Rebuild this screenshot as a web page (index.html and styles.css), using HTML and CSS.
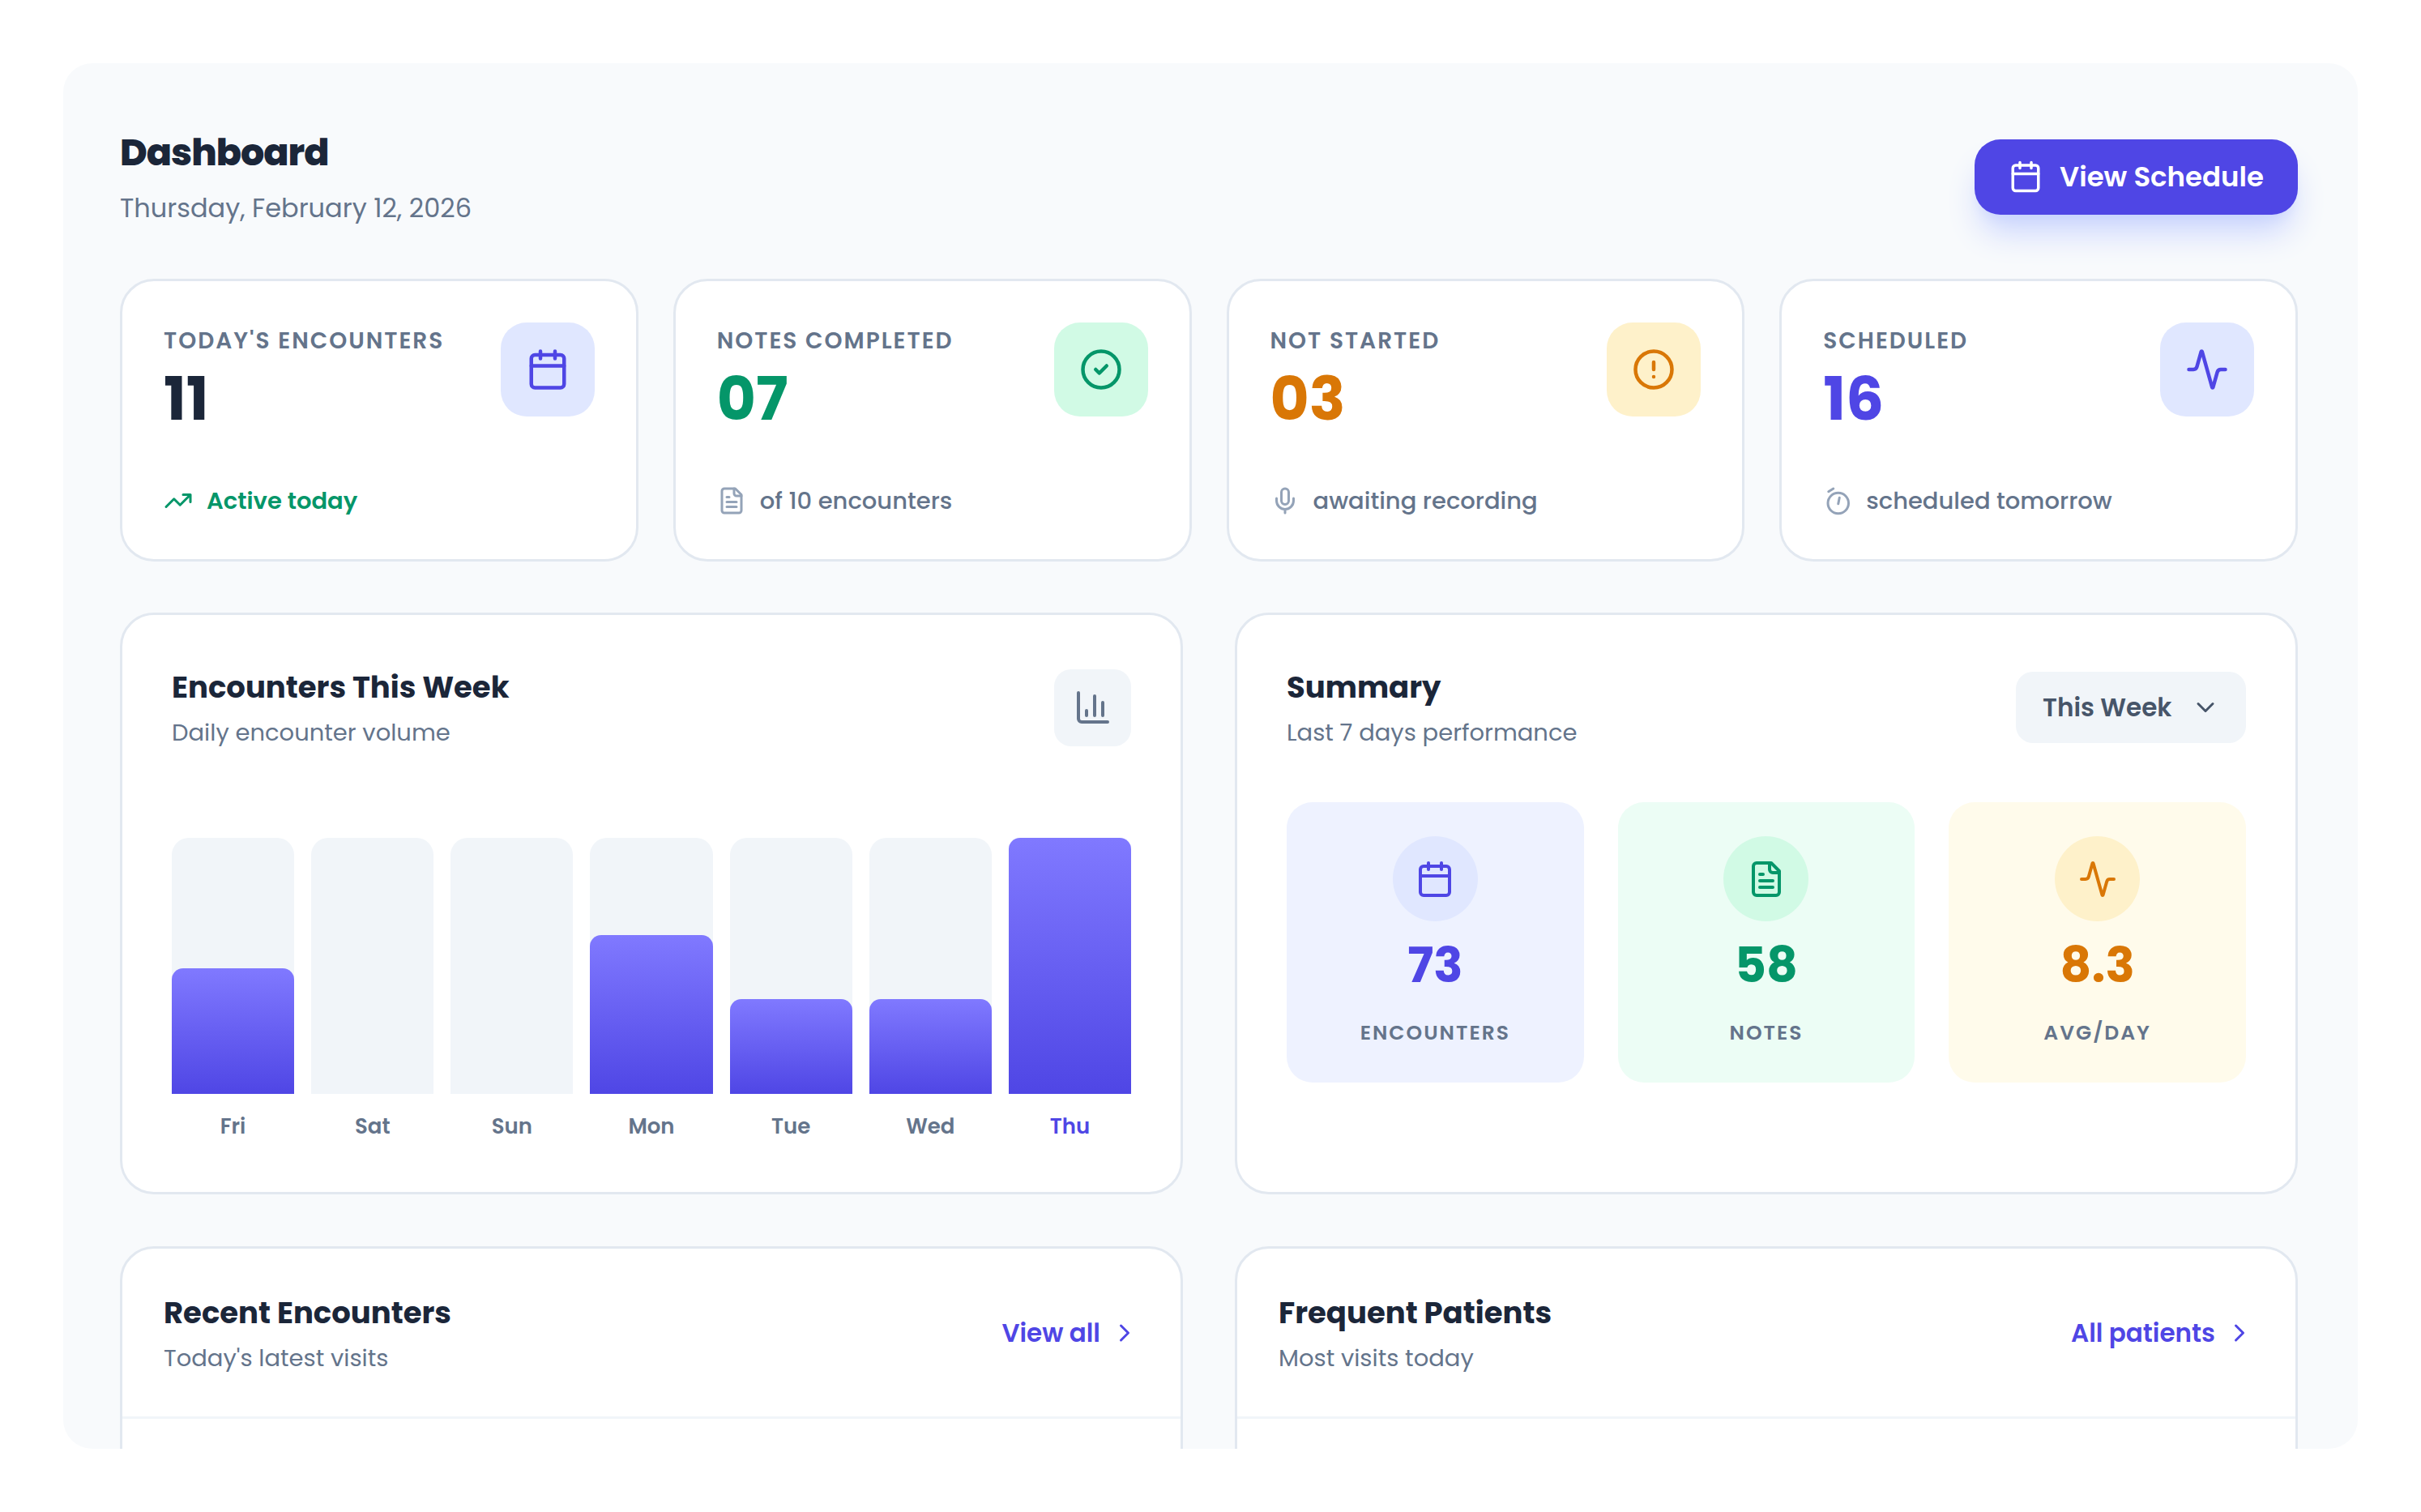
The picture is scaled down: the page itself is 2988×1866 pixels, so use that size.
FILE: index.html
```html
<!DOCTYPE html>
<html lang="en">
<head>
  <meta charset="UTF-8" />
  <meta name="viewport" content="width=device-width, initial-scale=1.0"/>
  <title>Dashboard</title>
  <link rel="stylesheet" href="styles.css">
</head>
<body>
  <!-- Icon sprite -->
  <svg class="sprite" aria-hidden="true">
    <symbol id="calendar" viewBox="0 0 24 24">
      <path d="M8 2v4M16 2v4M3 10h18"/>
      <rect x="3" y="4" width="18" height="18" rx="2"/>
    </symbol>
    <symbol id="check" viewBox="0 0 24 24">
      <circle cx="12" cy="12" r="10"/>
      <path d="m9 12 2 2 4-4"/>
    </symbol>
    <symbol id="alert" viewBox="0 0 24 24">
      <circle cx="12" cy="12" r="10"/>
      <path d="M12 8v4M12 16h.01"/>
    </symbol>
    <symbol id="activity" viewBox="0 0 24 24">
      <path d="M22 12h-2.48a2 2 0 0 0-1.93 1.46l-2.35 8.36a.25.25 0 0 1-.48 0L9.24 2.18a.25.25 0 0 0-.48 0l-2.35 8.36A2 2 0 0 1 4.49 12H2"/>
    </symbol>
    <symbol id="trending" viewBox="0 0 24 24">
      <path d="M22 7l-8.500 8.500-5-5L2 17M16 7h6v6"/>
    </symbol>
    <symbol id="file" viewBox="0 0 24 24">
      <path d="M15 2H6a2 2 0 0 0-2 2v16a2 2 0 0 0 2 2h12a2 2 0 0 0 2-2V7Z"/>
      <path d="M14 2v4a2 2 0 0 0 2 2h4M10 9H8M16 13H8M16 17H8"/>
    </symbol>
    <symbol id="mic" viewBox="0 0 24 24">
      <rect x="9" y="2" width="6" height="13" rx="3"/>
      <path d="M19 10v2a7 7 0 0 1-14 0v-2M12 19v3"/>
    </symbol>
    <symbol id="timer" viewBox="0 0 24 24">
      <circle cx="12.500" cy="14" r="8.500"/>
      <path d="M13.500 9.500l-1 5M4.500 4.500l4-2.500"/>
    </symbol>
    <symbol id="chart" viewBox="0 0 24 24">
      <path d="M3 3v16a2 2 0 0 0 2 2h16M18 17V9M13 17V5M8 17v-3"/>
    </symbol>
    <symbol id="down" viewBox="0 0 24 24">
      <path d="m6 9 6 6 6-6"/>
    </symbol>
    <symbol id="right" viewBox="0 0 24 24">
      <path d="m9 18 6-6-6-6"/>
    </symbol>
  </svg>

  <main class="dashboard">
    <header class="page-header">
      <div>
        <h1>Dashboard</h1>
        <p class="date">Thursday, February 12, 2026</p>
      </div>
      <button type="button" class="schedule-btn">
        <svg class="icon"><use href="#calendar"/></svg>
        View Schedule
      </button>
    </header>

    <section class="stats">
      <article class="stat">
        <div class="stat-top">
          <div>
            <h2 class="stat-label">Today's Encounters</h2>
            <p class="stat-value">11</p>
          </div>
          <div class="stat-icon indigo"><svg class="icon"><use href="#calendar"/></svg></div>
        </div>
        <p class="stat-note active"><svg class="icon"><use href="#trending"/></svg>Active today</p>
      </article>
      <article class="stat">
        <div class="stat-top">
          <div>
            <h2 class="stat-label">Notes Completed</h2>
            <p class="stat-value green-text">07</p>
          </div>
          <div class="stat-icon green"><svg class="icon"><use href="#check"/></svg></div>
        </div>
        <p class="stat-note"><svg class="icon"><use href="#file"/></svg>of 10 encounters</p>
      </article>
      <article class="stat">
        <div class="stat-top">
          <div>
            <h2 class="stat-label">Not Started</h2>
            <p class="stat-value amber-text">03</p>
          </div>
          <div class="stat-icon amber"><svg class="icon"><use href="#alert"/></svg></div>
        </div>
        <p class="stat-note"><svg class="icon"><use href="#mic"/></svg>awaiting recording</p>
      </article>
      <article class="stat">
        <div class="stat-top">
          <div>
            <h2 class="stat-label">Scheduled</h2>
            <p class="stat-value indigo-text">16</p>
          </div>
          <div class="stat-icon indigo"><svg class="icon"><use href="#activity"/></svg></div>
        </div>
        <p class="stat-note"><svg class="icon"><use href="#timer"/></svg>scheduled tomorrow</p>
      </article>
    </section>

    <section class="panels">
      <article class="panel">
        <div class="panel-header">
          <div>
            <h2 class="panel-title">Encounters This Week</h2>
            <p class="panel-sub">Daily encounter volume</p>
          </div>
          <div class="chart-icon"><svg class="icon"><use href="#chart"/></svg></div>
        </div>
        <div class="chart">
          <div class="day"><div class="track"><div class="fill" style="height: 49%"></div></div><span>Fri</span></div>
          <div class="day"><div class="track"></div><span>Sat</span></div>
          <div class="day"><div class="track"></div><span>Sun</span></div>
          <div class="day"><div class="track"><div class="fill" style="height: 62%"></div></div><span>Mon</span></div>
          <div class="day"><div class="track"><div class="fill" style="height: 37%"></div></div><span>Tue</span></div>
          <div class="day"><div class="track"><div class="fill" style="height: 37%"></div></div><span>Wed</span></div>
          <div class="day today"><div class="track"><div class="fill" style="height: 100%"></div></div><span>Thu</span></div>
        </div>
      </article>

      <article class="panel">
        <div class="panel-header">
          <div>
            <h2 class="panel-title">Summary</h2>
            <p class="panel-sub">Last 7 days performance</p>
          </div>
          <div class="period">
            <select id="period" aria-label="Summary period">
              <option>This Week</option>
              <option>Last Week</option>
            </select>
            <svg class="icon"><use href="#down"/></svg>
          </div>
        </div>
        <div class="tiles">
          <div class="tile tile-indigo">
            <div class="tile-icon indigo"><svg class="icon"><use href="#calendar"/></svg></div>
            <p class="tile-value indigo-text">73</p>
            <p class="tile-label">Encounters</p>
          </div>
          <div class="tile tile-green">
            <div class="tile-icon green"><svg class="icon"><use href="#file"/></svg></div>
            <p class="tile-value green-text">58</p>
            <p class="tile-label">Notes</p>
          </div>
          <div class="tile tile-amber">
            <div class="tile-icon amber"><svg class="icon"><use href="#activity"/></svg></div>
            <p class="tile-value amber-text">8.3</p>
            <p class="tile-label">Avg/Day</p>
          </div>
        </div>
      </article>
    </section>

    <section class="panels">
      <article class="list">
        <div class="list-header">
          <div>
            <h2 class="panel-title">Recent Encounters</h2>
            <p class="panel-sub">Today's latest visits</p>
          </div>
          <a href="#" class="more">View all <svg class="icon"><use href="#right"/></svg></a>
        </div>
      </article>
      <article class="list">
        <div class="list-header">
          <div>
            <h2 class="panel-title">Frequent Patients</h2>
            <p class="panel-sub">Most visits today</p>
          </div>
          <a href="#" class="more">All patients <svg class="icon"><use href="#right"/></svg></a>
        </div>
      </article>
    </section>
  </main>
</body>
</html>
```
FILE: styles.css
```css
* {
  box-sizing: border-box;
}
body {
  margin: 0;
  background: #fff;
  color: #1b2639;
  font-family: Poppins, Inter, sans-serif;
}
h1, h2, p {
  margin: 0;
}
.sprite {
  display: none;
}
.icon {
  display: block;
  flex-shrink: 0;
  fill: none;
  stroke: currentColor;
  stroke-width: 2;
  stroke-linecap: round;
  stroke-linejoin: round;
}
.dashboard {
  height: calc(100vh - 156px);
  margin: 78px;
  padding: 77px 74px 0 70px;
  background: #f8fafc;
  border-radius: 36px;
  overflow: hidden;
}

/* Header */
.page-header {
  display: flex;
  justify-content: space-between;
  align-items: center;
  margin-bottom: 63px;
}
h1 {
  font-size: 46px;
  font-weight: 800;
  line-height: 66px;
  letter-spacing: -1px;
}
.date {
  margin-top: 12px;
  font-size: 32px;
  line-height: 48px;
  color: #64748b;
}
.schedule-btn {
  display: flex;
  align-items: center;
  gap: 21px;
  height: 93px;
  padding: 0 42px;
  border: none;
  border-radius: 32px;
  background: #4f46e5;
  color: #fff;
  font-family: inherit;
  font-size: 34px;
  font-weight: 600;
  cursor: pointer;
  box-shadow:
    0 28px 42px -8px #c7d2fe,
    0 11px 17px -11px #c7d2fe;
}
.schedule-btn .icon {
  width: 42px;
  height: 42px;
}

/* Colours */
.indigo {
  background: #e0e7ff;
  color: #4f46e5;
}
.green {
  background: #d1fae5;
  color: #059669;
}
.amber {
  background: #fef1ca;
  color: #d97706;
}
.indigo-text {
  color: #4f46e5;
}
.green-text {
  color: #059669;
}
.amber-text {
  color: #d97706;
}

/* Stat cards */
.stats {
  display: grid;
  grid-template-columns: repeat(4, 1fr);
  gap: 43px;
  margin-bottom: 63px;
}
.stat {
  padding: 51px;
  background: #fff;
  border: 3px solid #e2e8f0;
  border-radius: 42px;
}
.stat-top {
  display: flex;
  justify-content: space-between;
  align-items: flex-start;
  margin-bottom: 56px;
}
.stat-label {
  font-size: 28px;
  font-weight: 600;
  line-height: 45px;
  letter-spacing: 2px;
  text-transform: uppercase;
  color: #64748b;
}
.stat-value {
  font-size: 74px;
  font-weight: 700;
  line-height: 98px;
}
.stat-icon {
  display: flex;
  justify-content: center;
  align-items: center;
  width: 116px;
  height: 116px;
  border-radius: 32px;
}
.stat-icon .icon {
  width: 54px;
  height: 54px;
}
.stat-note {
  display: flex;
  align-items: center;
  gap: 17px;
  font-size: 29px;
  font-weight: 500;
  line-height: 42px;
  color: #64748b;
}
.stat-note .icon {
  width: 36px;
  height: 36px;
  color: #94a3b8;
}
.stat-note.active, .active .icon {
  color: #059669;
}
.stat-note.active {
  font-weight: 600;
}

/* Panels */
.panels {
  display: grid;
  grid-template-columns: repeat(2, 1fr);
  gap: 64px;
  margin-bottom: 64px;
}
.panel {
  padding: 61px;
  background: #fff;
  border: 3px solid #e2e8f0;
  border-radius: 42px;
}
.panel-header {
  display: flex;
  justify-content: space-between;
  align-items: center;
}
.panel-title {
  margin-bottom: 6px;
  font-size: 37px;
  font-weight: 700;
  line-height: 56px;
}
.panel-sub {
  font-size: 29px;
  line-height: 44px;
  color: #64748b;
}
.chart-icon {
  display: flex;
  justify-content: center;
  align-items: center;
  width: 95px;
  height: 95px;
  border-radius: 21px;
  background: #f1f5f9;
  color: #64748b;
}
.chart-icon .icon {
  width: 48px;
  height: 48px;
}

/* Bar chart */
.chart {
  display: grid;
  grid-template-columns: repeat(7, 1fr);
  gap: 21px;
  margin-top: 108px;
}
.track {
  display: flex;
  align-items: flex-end;
  height: 316px;
  margin-bottom: 20px;
  border-radius: 21px 21px 0 0;
  background: #f1f5f9;
}
.today .track {
  background: none;
}
.fill {
  width: 100%;
  border-radius: 14px 14px 0 0;
  background: linear-gradient(#8079ff, #4f46e5);
}
.day {
  text-align: center;
  font-size: 26px;
  font-weight: 600;
  line-height: 40px;
  color: #64748b;
}
.day span {
  display: block;
}
.today {
  color: #4f46e5;
}

/* Summary */
.period {
  position: relative;
}
.period select {
  display: block;
  appearance: none;
  width: 284px;
  height: 88px;
  padding: 0 80px 0 33px;
  border: none;
  border-radius: 21px;
  background: #f1f5f9;
  color: #475569;
  font-family: inherit;
  font-size: 31px;
  font-weight: 600;
}
.period .icon {
  position: absolute;
  top: 26px;
  right: 32px;
  width: 36px;
  height: 36px;
  color: #475569;
  pointer-events: none;
}
.tiles {
  display: grid;
  grid-template-columns: repeat(3, 1fr);
  gap: 42px;
  margin-top: 64px;
}
.tile {
  padding: 42px;
  border-radius: 32px;
  text-align: center;
}
.tile-indigo {
  background: #eef2ff;
}
.tile-green {
  background: #ecfdf5;
}
.tile-amber {
  background: #fffbeb;
}
.tile-icon {
  display: flex;
  justify-content: center;
  align-items: center;
  width: 105px;
  height: 105px;
  margin: 0 auto 12px;
  border-radius: 50%;
}
.tile-icon .icon {
  width: 48px;
  height: 48px;
}
.tile-value {
  font-size: 60px;
  font-weight: 700;
  line-height: 84px;
}
.tile-label {
  margin-top: 23px;
  font-size: 25px;
  font-weight: 600;
  line-height: 38px;
  letter-spacing: 2px;
  text-transform: uppercase;
  color: #64748b;
}

/* Lists */
.list {
  min-height: 400px;
  background: #fff;
  border: 3px solid #e2e8f0;
  border-radius: 42px;
}
.list-header {
  display: flex;
  justify-content: space-between;
  align-items: center;
  padding: 51px 51px 50px;
  border-bottom: 3px solid #f1f5f9;
}
.more {
  display: flex;
  align-items: center;
  gap: 12px;
  font-size: 31px;
  font-weight: 600;
  color: #4f46e5;
  text-decoration: none;
}
.more .icon {
  width: 36px;
  height: 36px;
}
```
